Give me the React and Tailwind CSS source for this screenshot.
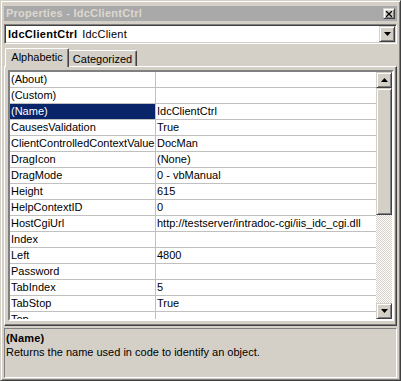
import React from "react";

const rows = [
  ["(About)", ""],
  ["(Custom)", ""],
  ["(Name)", "IdcClientCtrl"],
  ["CausesValidation", "True"],
  ["ClientControlledContextValue", "DocMan"],
  ["DragIcon", "(None)"],
  ["DragMode", "0 - vbManual"],
  ["Height", "615"],
  ["HelpContextID", "0"],
  ["HostCgiUrl", "http://testserver/intradoc-cgi/iis_idc_cgi.dll"],
  ["Index", ""],
  ["Left", "4800"],
  ["Password", ""],
  ["TabIndex", "5"],
  ["TabStop", "True"],
  ["Top", ""],
];

const raised =
  "border border-t-[#d4d0c8] border-l-[#d4d0c8] border-r-[#404040] border-b-[#404040] shadow-[inset_1px_1px_0_#ffffff,inset_-1px_-1px_0_#808080] bg-[#d4d0c8]";

function Arrow({ up }) {
  return (
    <svg width="7" height="4" viewBox="0 0 7 4">
      {up ? (
        <polygon points="3.5,0 7,4 0,4" fill="#000" />
      ) : (
        <polygon points="0,0 7,0 3.5,4" fill="#000" />
      )}
    </svg>
  );
}

export default function App() {
  return (
    <div className="w-[401px] h-[381px] bg-[#d4d0c8] border border-t-[#d4d0c8] border-l-[#d4d0c8] border-r-[#404040] border-b-[#404040] shadow-[inset_1px_1px_0_#ffffff,inset_-1px_-1px_0_#808080] px-[3px] pt-[5px] flex flex-col font-['Liberation_Sans',Arial,sans-serif] text-[11px] text-black overflow-hidden">
      {/* title bar */}
      <div className="h-[15px] bg-[#a9a9a9] flex items-center justify-between pl-[2px] pr-[2px]">
        <span className="font-bold text-[#dcd8d0] leading-[15px] tracking-[0.25px]">
          Properties - IdcClientCtrl
        </span>
        <div className={"w-[12px] h-[11px] flex items-center justify-center " + raised}>
          <svg width="6" height="6" viewBox="0 0 6 6">
            <path d="M0 0 L6 6 M6 0 L0 6" stroke="#000" strokeWidth="1.3" />
          </svg>
        </div>
      </div>

      {/* combobox */}
      <div className="mt-[3px] h-[20px] bg-white border border-t-[#808080] border-l-[#808080] border-r-white border-b-white shadow-[inset_1px_1px_0_#404040,inset_-1px_-1px_0_#d4d0c8] flex items-center p-[1px]">
        <div className="flex-1 pl-[2px] leading-[16px] whitespace-nowrap">
          <span className="font-bold tracking-[0.3px]">IdcClientCtrl</span>
          <span className="ml-[5px] tracking-[0.2px]">IdcClient</span>
        </div>
        <div className={"w-[16px] h-[16px] flex items-center justify-center " + raised}>
          <Arrow />
        </div>
      </div>

      {/* tabs */}
      <div className="mt-[3px] h-[19px] flex items-end pl-[1px]">
        <div className="relative z-10 -mb-px h-[19px] w-[64px] bg-[#d4d0c8] border-t border-l border-t-white border-l-white border-r border-r-[#404040] shadow-[inset_-1px_0_0_#808080] rounded-t-[2px] flex items-center justify-center leading-[15px] pb-[1px]">
          Alphabetic
        </div>
        <div className="h-[16px] w-[68px] bg-[#d4d0c8] border-t border-t-white border-r border-r-[#404040] shadow-[inset_-1px_0_0_#808080] rounded-tr-[2px] flex items-center justify-center leading-[15px] pt-[1px]">
          Categorized
        </div>
      </div>

      {/* tab panel */}
      <div className="h-[260px] border border-t-white border-l-white border-r-[#404040] border-b-[#404040] shadow-[inset_-1px_-1px_0_#808080] pl-[3px] pr-[2px] pt-[3px] pb-[3px]">
        <div className="h-[251px] border-2 border-t-[#808080] border-l-[#808080] border-r-white border-b-white shadow-[inset_1px_1px_0_#404040,inset_-1px_-1px_0_#d4d0c8] flex">
          <div className="flex-1 bg-white overflow-hidden h-[247px]">
            {rows.map(([name, value]) => {
              const sel = name === "(Name)";
              return (
                <div key={name} className="flex h-[16px] border-b border-b-[#c0c0c0]">
                  <div
                    className={
                      "w-[146px] shrink-0 border-r border-r-[#c0c0c0] pl-[1px] leading-[15px] whitespace-nowrap overflow-hidden " +
                      (sel ? "bg-[#0a246a] text-white" : "")
                    }
                  >
                    {name}
                  </div>
                  <div className="flex-1 pl-[1px] leading-[15px] whitespace-nowrap overflow-hidden">
                    {value}
                  </div>
                </div>
              );
            })}
          </div>
          {/* scrollbar */}
          <div className="w-[16px] h-[247px] flex flex-col">
            <div className={"h-[16px] shrink-0 flex items-center justify-center " + raised}>
              <Arrow up />
            </div>
            <div className={"h-[127px] shrink-0 " + raised}></div>
            <div className="flex-1 bg-[image:repeating-conic-gradient(#d4d0c8_0%_25%,#ffffff_0%_50%)] bg-[length:2px_2px]"></div>
            <div className={"h-[16px] shrink-0 flex items-center justify-center " + raised}>
              <Arrow />
            </div>
          </div>
        </div>
      </div>

      {/* description */}
      <div className="mt-[2px] h-[50px] border border-t-[#808080] border-l-[#808080] border-r-white border-b-white pt-[2px] pl-[1px]">
        <div className="font-bold leading-[14px] tracking-[0.2px]">(Name)</div>
        <div className="leading-[14px]">Returns the name used in code to identify an object.</div>
      </div>
    </div>
  );
}
